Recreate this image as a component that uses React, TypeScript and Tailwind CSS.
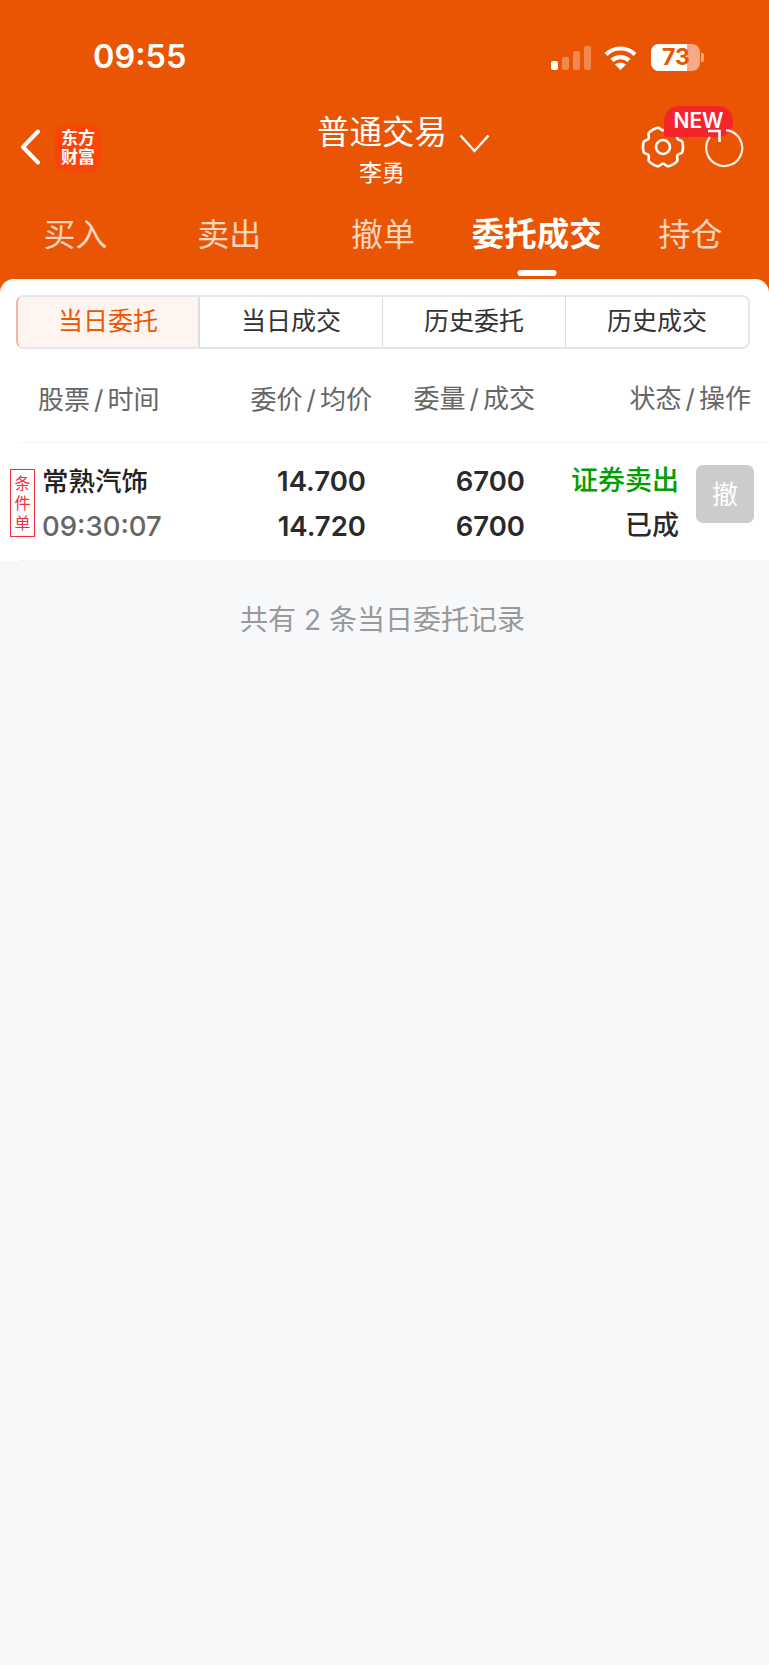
import React from "react";

const font = "font-['Inter','Noto_Sans_CJK_SC',sans-serif]";

const tabs = ["买入", "卖出", "撤单", "委托成交", "持仓"];
const segments = ["当日委托", "当日成交", "历史委托", "历史成交"];

// wide lobes with narrow notches, six of them
const gearPath = Array.from({ length: 181 }, (_, i) => {
    const t = (i / 180) * Math.PI * 2;
    const r = 20 - 3.4 * Math.pow(Math.max(0, -Math.cos(6 * t)), 1.5);
    return `${i === 0 ? "M" : "L"}${(22 + r * Math.cos(t)).toFixed(2)} ${(22 + r * Math.sin(t)).toFixed(2)}`;
}).join(" ") + "Z";

function StatusBar() {
    return (
        <div className="flex h-[114px] items-center pl-[93px] text-white">
            <span className="w-[458px] text-[32.5px] font-semibold leading-none">09:55</span>
            <div className="flex h-[25px] items-end gap-[4px]">
                <span className="h-[9px] w-[7px] rounded-[2px] bg-white" />
                <span className="h-[13px] w-[7px] rounded-[2px] bg-white/30" />
                <span className="h-[19px] w-[7px] rounded-[2px] bg-white/30" />
                <span className="h-[24px] w-[7px] rounded-[2px] bg-white/30" />
            </div>
            <svg className="ml-[13px]" width="33" height="25" viewBox="0 0 33 25" fill="none" stroke="white" strokeWidth="4.2">
                <path d="M2 9.5C10 1.5 23 1.5 31 9.5" />
                <path d="M8 15.5C12.5 11 20.5 11 25 15.5" />
                <path d="M16.5 25 L11 19.5 C14 17 19 17 22 19.5Z" fill="white" stroke="none" />
            </svg>
            <div className="ml-[14px] flex h-[27px] w-[49px] overflow-hidden rounded-[8px] bg-white/50">
                <div className="w-[36px] bg-white" />
                <span className="-ml-[25px] text-[23px] font-bold leading-[27px] text-[#ea5503]">73</span>
            </div>
            <span className="ml-[1px] h-[9px] w-[3px] rounded-r-[2px] bg-white/50" />
        </div>
    );
}

function NavBar() {
    return (
        <div className="grid h-[86px] grid-cols-[1fr_auto_1fr] pr-[5px] text-white">
            <div className="flex items-start pl-[20px] pt-[15px]">
                <svg width="21" height="36" viewBox="0 0 21 36" fill="none" stroke="white" strokeWidth="4" strokeLinecap="round" strokeLinejoin="round">
                    <path d="M18 2.5 L3 18 L18 33.5" />
                </svg>
                <div className="-mt-[4px] ml-[14px] flex h-[46px] w-[46px] flex-col items-center justify-center rounded-[9px] bg-[#f9440a] text-[17px] font-bold leading-[19px]">
                    <span>东方</span>
                    <span>财富</span>
                </div>
            </div>
            <div className="flex flex-col items-center">
                <span className="text-[32.5px] leading-[38px]">普通交易</span>
                <span className="mt-[6px] text-[23px] leading-[30px]">李勇</span>
            </div>
            <div className="flex items-start pt-[20px]">
                <svg className="ml-[12px]" width="31" height="19" viewBox="0 0 31 19" fill="none" stroke="white" strokeWidth="2.4">
                    <path d="M1.5 1.5 L15.5 17 L29.5 1.5" />
                </svg>
                <div className="relative ml-[151px] flex items-start">
                    <svg className="-mt-[9px]" width="44" height="44" viewBox="0 0 44 44" fill="none" stroke="white" strokeWidth="2.6">
                        <path d={gearPath} />
                        <circle cx="22" cy="22" r="7" />
                    </svg>
                    <span className="absolute -top-[28px] left-[23px] h-[31px] w-[69px] rounded-[15px] rounded-bl-[3px] bg-[#f5242b] text-center text-[21px] font-semibold leading-[30px]">
                        NEW
                    </span>
                    <svg className="relative -mt-[6px] ml-[19px]" width="40" height="40" viewBox="0 0 40 40" fill="none" stroke="white" strokeWidth="2.2">
                        <path d="M22 2.1 A18 18 0 1 1 6 9" strokeOpacity="0.9" />
                        <path d="M4 3 H15.5 V14" strokeWidth="2.6" />
                    </svg>
                </div>
            </div>
        </div>
    );
}

function Tabs() {
    return (
        <div className="-ml-[1.5px] grid h-[79px] w-[769px] grid-cols-5 pt-[14px] text-white">
            {tabs.map((t) => {
                const active = t === "委托成交";
                return (
                    <div key={t} className="relative flex h-[56px] items-start justify-center">
                        <span className={active ? "text-[32.5px] font-semibold leading-[42px]" : "text-[32px] leading-[42px] text-white/75"}>{t}</span>
                        {active && <span className="absolute bottom-[-6px] left-1/2 h-[6px] w-[39px] -translate-x-1/2 rounded-full bg-white" />}
                    </div>
                );
            })}
        </div>
    );
}

function Segments() {
    return (
        <div className="ml-[16px] mr-[19px] flex h-[54px] overflow-hidden rounded-[8px] border-2 border-[#e3e6ec] border-l-[#f2b79c]">
            {segments.map((s, i) => (
                <div
                    key={s}
                    className={
                        i === 0
                            ? "flex w-[182px] items-center justify-center border-r-2 border-[#d9dde4] bg-[#fef5f1] text-[25px] text-[#ee5500]"
                            : i === 3
                              ? "flex flex-1 items-center justify-center text-[25px] text-[#333333]"
                              : "flex w-[183px] items-center justify-center border-r border-[#d9dde4] text-[25px] text-[#333333]"
                    }
                >
                    {s}
                </div>
            ))}
        </div>
    );
}

function Slashed({ a, b }: { a: string; b: string }) {
    return (
        <span className="text-[26px] leading-none text-[#666666]">
            {a}
            <span className="mx-[4px]">/</span>
            {b}
        </span>
    );
}

function OrderTable() {
    return (
        <>
            <div className="flex h-[93px] items-center pt-[8px]">
                <div className="w-[372px] pl-[38px]">
                    <div className="flex justify-between">
                        <Slashed a="股票" b="时间" />
                        <Slashed a="委价" b="均价" />
                    </div>
                </div>
                <div className="w-[163px] text-right">
                    <Slashed a="委量" b="成交" />
                </div>
                <div className="w-[216px] text-right">
                    <Slashed a="状态" b="操作" />
                </div>
            </div>
            <div className="ml-[20px] h-[119px] border-y border-[#f3f4f6]">
                <div className="-ml-[20px] flex h-[117px] items-start">
                    <div className="ml-[10px] mt-[26px] flex h-[68px] w-[25px] flex-col items-center justify-center border border-[#f5303c] text-[16px] leading-[20px] text-[#f5303c]">
                        <span>条</span>
                        <span>件</span>
                        <span>单</span>
                    </div>
                    <div className="ml-[7px] mt-[16px] w-[324px]">
                        <div className="flex h-[45px] items-center justify-between">
                            <span className="text-[26.5px] font-medium text-[#222222]">常熟汽饰</span>
                            <span className="text-[27.5px] font-semibold text-[#2a2a2a]">14.700</span>
                        </div>
                        <div className="flex h-[45px] items-center justify-between">
                            <span className="text-[27.5px] font-medium text-[#666666]">09:30:07</span>
                            <span className="text-[27.5px] font-semibold text-[#2a2a2a]">14.720</span>
                        </div>
                    </div>
                    <div className="mt-[16px] w-[159px] text-right text-[27.5px] font-semibold text-[#2a2a2a]">
                        <div className="flex h-[45px] items-center justify-end">6700</div>
                        <div className="flex h-[45px] items-center justify-end">6700</div>
                    </div>
                    <div className="mt-[16px] w-[154px] text-[27px] font-medium">
                        <div className="flex h-[45px] items-center justify-end text-[#00a000]">证券卖出</div>
                        <div className="flex h-[45px] items-center justify-end text-[#2a2a2a]">已成</div>
                    </div>
                    <div className="ml-[17px] mt-[22px] flex h-[58px] w-[58px] items-center justify-center rounded-[7px] bg-[#cccccc] text-[26px] text-white">
                        撤
                    </div>
                </div>
            </div>
        </>
    );
}

export default function App() {
    return (
        <div className={`${font} flex h-[1665px] w-[769px] flex-col overflow-hidden bg-[#f7f8fa]`}>
            <div className="bg-[#ea5503]">
                <StatusBar />
                <NavBar />
                <Tabs />
                <div className="rounded-t-[14px] bg-white pt-[16px]">
                    <Segments />
                    <OrderTable />
                </div>
            </div>
            <div className="mt-[39px] pr-[4px] text-center text-[28px] leading-[40px] text-[#999999]">共有 2 条当日委托记录</div>
        </div>
    );
}
